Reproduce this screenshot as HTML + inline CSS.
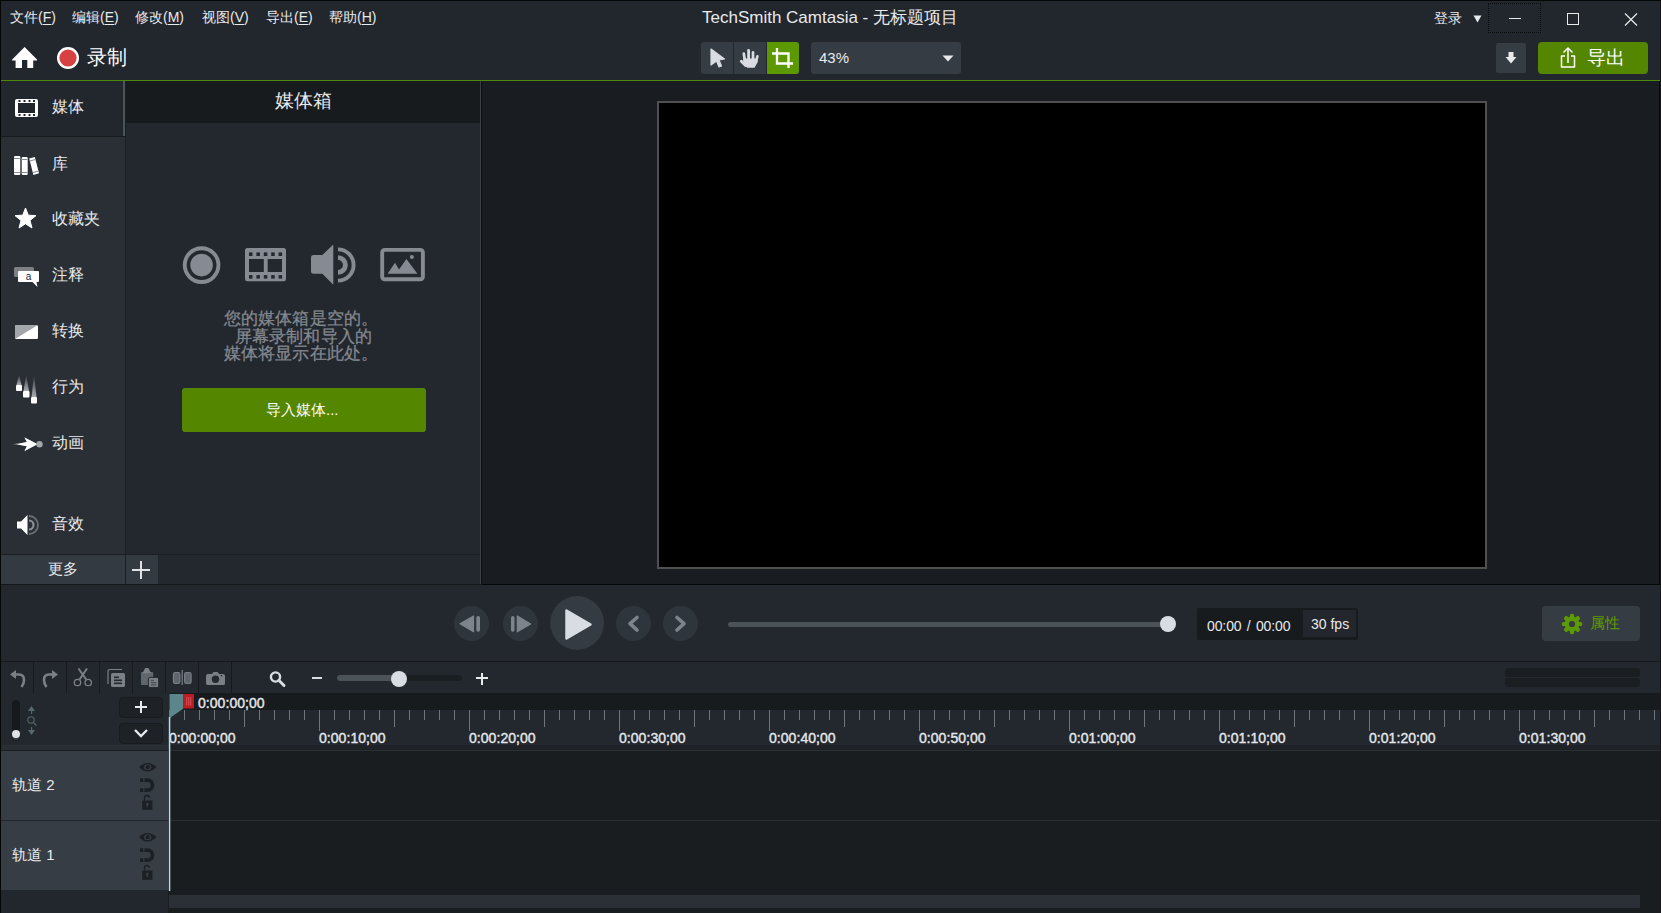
<!DOCTYPE html>
<html><head><meta charset="utf-8">
<style>
*{margin:0;padding:0;box-sizing:border-box}
html,body{width:1661px;height:913px;overflow:hidden;background:#22262d;font-family:"Liberation Sans",sans-serif;color:#e6e8ea}
.a{position:absolute}
.t{position:absolute;white-space:nowrap;line-height:1}
u{text-decoration-thickness:1px;text-underline-offset:2px}
</style></head><body>
<!-- title bar + toolbar -->
<div class="a" style="left:0;top:0;width:1661px;height:80px;background:#22262d"></div>
<div class="a" style="left:0;top:80px;width:1661px;height:1px;background:#4d8a0c"></div>


<!-- menu -->
<div class="t" style="left:10px;top:10px;font-size:14px;color:#e8eaec">文件(<u>F</u>)</div>
<div class="t" style="left:72px;top:10px;font-size:14px;color:#e8eaec">编辑(<u>E</u>)</div>
<div class="t" style="left:135px;top:10px;font-size:14px;color:#e8eaec">修改(<u>M</u>)</div>
<div class="t" style="left:202px;top:10px;font-size:14px;color:#e8eaec">视图(<u>V</u>)</div>
<div class="t" style="left:266px;top:10px;font-size:14px;color:#e8eaec">导出(<u>E</u>)</div>
<div class="t" style="left:329px;top:10px;font-size:14px;color:#e8eaec">帮助(<u>H</u>)</div>
<div class="t" style="left:702px;top:9px;font-size:17px;color:#e8eaec">TechSmith Camtasia - 无标题项目</div>
<div class="t" style="left:1434px;top:11px;font-size:14px;color:#e8eaec">登录</div>
<svg class="a" style="left:1472.5px;top:15px" width="10" height="9"><path d="M0.5 0.5H8.5L4.5 7.5Z" fill="#e8eaec"/></svg>
<div class="a" style="left:1488px;top:3px;width:53px;height:30px;border:1px dotted #0b0c0e"></div>
<div class="a" style="left:1509px;top:18px;width:12px;height:1px;background:#e8eaec"></div>
<div class="a" style="left:1567px;top:13px;width:12px;height:12px;border:1px solid #e8eaec"></div>
<svg class="a" style="left:1624px;top:13px" width="14" height="13"><path d="M1 0.5L13 12.5M13 0.5L1 12.5" stroke="#e8eaec" stroke-width="1.2"/></svg>
<!-- home + record -->
<svg class="a" style="left:11px;top:46px" width="28" height="24"><path d="M13.6 1L26 13.5Q26.5 14.5 25.5 14.5H22.2V22H16.3V14H11V22H4.6V14.5H1.6Q0.5 14.5 1.2 13.5Z" fill="#fff"/></svg>
<svg class="a" style="left:56px;top:46px" width="24" height="24"><circle cx="12" cy="12" r="9.8" fill="#d64141" stroke="#fff" stroke-width="2.4"/></svg>
<div class="t" style="left:87px;top:47px;font-size:20px;color:#fff">录制</div>
<!-- tools -->
<div class="a" style="left:701px;top:42px;width:98px;height:32px;background:#363c44;border-radius:3px"></div>
<div class="a" style="left:733px;top:42px;width:1px;height:32px;background:#22262d"></div>
<div class="a" style="left:766px;top:42px;width:1px;height:32px;background:#22262d"></div>
<div class="a" style="left:767px;top:42px;width:32px;height:32px;background:#5c9900;border-radius:0 3px 3px 0"></div>
<svg class="a" style="left:709px;top:48px" width="18" height="22"><path d="M2 1L15.5 11L10 12L12.5 18L10 19L7.5 13L2 17Z" fill="#d9dce2" stroke="#d9dce2" stroke-width="1.2" stroke-linejoin="round"/></svg>
<svg class="a" style="left:738px;top:47px" width="22" height="23"><g stroke="#d9dce2" stroke-linecap="round" fill="none"><path d="M5.8 6.6L6.8 13" stroke-width="2.7"/><path d="M10.6 3.3V12" stroke-width="2.8"/><path d="M15 5.4V12.5" stroke-width="2.7"/><path d="M19.4 9.3L18 14.5" stroke-width="2.6"/><path d="M3.3 14.3L7.5 18.5" stroke-width="2.8"/></g><path d="M5 11.5H20L19.5 15.5L16.5 20.8H9.2L5.5 17Z" fill="#d9dce2"/></svg>
<svg class="a" style="left:770px;top:46px" width="26" height="24"><path d="M7 2V17.5H23M2 7.5H18.5V22" stroke="#fff" stroke-width="2.3" fill="none"/></svg>
<div class="a" style="left:811px;top:42px;width:150px;height:32px;background:#363c44;border-radius:3px"></div>
<div class="t" style="left:819px;top:50px;font-size:15px;color:#e8eaec">43%</div>
<svg class="a" style="left:942px;top:55px" width="12" height="7"><path d="M0.5 0.5H11.5L6 6.5Z" fill="#e8eaec"/></svg>
<!-- right toolbar -->
<div class="a" style="left:1496px;top:43px;width:30px;height:30px;background:#363c44;border-radius:2px"></div>
<svg class="a" style="left:1504px;top:51px" width="14" height="14"><path d="M4.5 1H9.5V6H12.5L7 12.5L1.5 6H4.5Z" fill="#e8eaec"/></svg>
<div class="a" style="left:1538px;top:42px;width:110px;height:32px;background:#548600;border-radius:4px"></div>
<svg class="a" style="left:1558px;top:46px" width="20" height="23"><path d="M10 17V2M5.5 6.5L10 2L14.5 6.5M7 10H3.5V21H16.5V10H13" stroke="#fff" stroke-width="1.5" fill="none" stroke-linejoin="round"/></svg>
<div class="t" style="left:1587px;top:48px;font-size:19px;color:#fff">导出</div>

<!-- left tabs -->
<div class="a" style="left:0;top:81px;width:125px;height:473px;background:#2a2f36"></div>
<div class="a" style="left:0;top:81px;width:123px;height:55px;background:#22262d"></div>
<div class="a" style="left:123px;top:81px;width:2px;height:55px;background:#4a555a"></div>
<div class="a" style="left:0;top:136px;width:125px;height:1px;background:#181b1e"></div>
<div class="a" style="left:125px;top:81px;width:1px;height:504px;background:#1b1e22"></div>
<!-- more bar -->
<div class="a" style="left:0;top:554px;width:481px;height:1px;background:#1b1e22"></div>
<div class="a" style="left:0;top:555px;width:125px;height:29px;background:#343a42"></div>
<div class="a" style="left:126px;top:555px;width:32px;height:29px;background:#343a42"></div>


<!-- tab contents -->
<div class="a" style="left:0;top:81px;width:1px;height:504px;background:#121417"></div>
<svg class="a" style="left:14px;top:98px" width="26" height="21"><rect x="1" y="1" width="23" height="18" rx="2" fill="#fff"/><rect x="4" y="5" width="17" height="10" fill="#22262d"/><g fill="#22262d"><rect x="4.5" y="2" width="2" height="2"/><rect x="9.5" y="2" width="2" height="2"/><rect x="14.5" y="2" width="2" height="2"/><rect x="19" y="2" width="2" height="2"/><rect x="4.5" y="16" width="2" height="2"/><rect x="9.5" y="16" width="2" height="2"/><rect x="14.5" y="16" width="2" height="2"/><rect x="19" y="16" width="2" height="2"/></g></svg>
<div class="t" style="left:52px;top:99px;font-size:16px;color:#e8eaec">媒体</div>
<svg class="a" style="left:13px;top:155px" width="28" height="22"><g fill="#fff"><rect x="1" y="1" width="6.3" height="19" rx="1.2"/><rect x="8.7" y="2" width="6" height="18" rx="1.2"/><path d="M16.2 3.6L21.8 2L26 18.3L20.4 20Z"/></g><g fill="#8a8e93"><rect x="1" y="3" width="6.3" height="1"/><rect x="1" y="17" width="6.3" height="1"/><rect x="8.7" y="4" width="6" height="1"/><rect x="8.7" y="17" width="6" height="1"/><path d="M16.7 5.6L22.3 4L22.55 5L16.95 6.6Z"/><path d="M19.9 17L25.5 15.4L25.75 16.4L20.15 18Z"/></g></svg>
<div class="t" style="left:52px;top:156px;font-size:16px;color:#e8eaec">库</div>
<svg class="a" style="left:14px;top:207px" width="24" height="23"><path d="M11.5 1L14.3 8.2L22 8.6L16 13.5L18 21L11.5 16.8L5 21L7 13.5L1 8.6L8.7 8.2Z" fill="#fff" stroke="#fff" stroke-width="1" stroke-linejoin="round"/></svg>
<div class="t" style="left:52px;top:211px;font-size:16px;color:#e8eaec">收藏夹</div>
<svg class="a" style="left:13px;top:266px" width="28" height="23"><rect x="1" y="1" width="20" height="10" rx="1.5" fill="#7d8186"/><path d="M6 5H25Q26 5 26 6V15Q26 16 25 16H23.5L24.5 21L19.5 16H6Q5 16 5 15V6Q5 5 6 5Z" fill="#fff"/><text x="15.5" y="14" font-size="10" font-family="Liberation Sans" text-anchor="middle" fill="#22262d">a</text></svg>
<div class="t" style="left:52px;top:267px;font-size:16px;color:#e8eaec">注释</div>
<svg class="a" style="left:14px;top:324px" width="25" height="16"><rect x="1" y="1" width="23" height="14" rx="1.5" fill="#fff"/><path d="M1 15V2.5Q1 1 2.5 1H24Z" fill="#a3a6aa"/></svg>
<div class="t" style="left:52px;top:323px;font-size:16px;color:#e8eaec">转换</div>
<svg class="a" style="left:14px;top:375px" width="26" height="30"><defs><linearGradient id="tr" x1="0" y1="0" x2="0" y2="1"><stop offset="0" stop-color="#fff" stop-opacity="0.05"/><stop offset="1" stop-color="#fff" stop-opacity="0.6"/></linearGradient></defs><path d="M2.5 10L5 0L7.5 10Z" fill="url(#tr)"/><path d="M9.5 16L12.2 0L15 16Z" fill="url(#tr)"/><path d="M17.5 22L20 0L22.5 22Z" fill="url(#tr)"/><g fill="#fff"><rect x="2" y="10" width="6" height="6" rx="1"/><rect x="9" y="16" width="6.5" height="6.5" rx="1"/><rect x="17" y="22" width="6" height="6.5" rx="1"/></g></svg>
<div class="t" style="left:52px;top:379px;font-size:16px;color:#e8eaec">行为</div>
<svg class="a" style="left:11px;top:436px" width="33" height="17"><defs><linearGradient id="an" x1="0" y1="0" x2="1" y2="0"><stop offset="0" stop-color="#fff" stop-opacity="0.2"/><stop offset="0.6" stop-color="#fff"/></linearGradient></defs><path d="M1 8.2Q12 7 16 6L13.5 1.5L26 8L13.5 15L16 10Q12 9.5 1 8.2Z" fill="url(#an)"/><path d="M6 8.2L16 6L13.5 1.5L26.5 8.2L13.5 15L16 10.3Z" fill="#fff"/><circle cx="28.5" cy="8.2" r="3.2" fill="#a3a6aa"/></svg>
<div class="t" style="left:52px;top:435px;font-size:16px;color:#e8eaec">动画</div>
<svg class="a" style="left:16px;top:514px" width="24" height="22"><path d="M1 7.5H5L11.5 1V21L5 14.5H1Z" fill="#fff"/><path d="M13 6.5A4.5 4.5 0 0 1 13 15.5" stroke="#8b8f94" stroke-width="2.2" fill="none"/><path d="M13 2A9 9 0 0 1 13 20" stroke="#6b6f74" stroke-width="1.8" fill="none"/></svg>
<div class="t" style="left:52px;top:516px;font-size:16px;color:#e8eaec">音效</div>
<div class="t" style="left:48px;top:561px;font-size:15px;color:#e8eaec">更多</div>
<div class="a" style="left:132px;top:569px;width:18px;height:2px;background:#e0e2e6"></div>
<div class="a" style="left:140px;top:561px;width:2px;height:18px;background:#e0e2e6"></div>

<!-- media bin -->
<div class="a" style="left:126px;top:81px;width:354px;height:473px;background:#23272e"></div>
<div class="a" style="left:126px;top:81px;width:354px;height:42px;background:#181b1e"></div>
<div class="a" style="left:158px;top:555px;width:322px;height:29px;background:#23272e"></div>
<div class="a" style="left:480px;top:81px;width:1px;height:504px;background:#3a3f45"></div>
<div class="a" style="left:481px;top:81px;width:1px;height:504px;background:#0d0f11"></div>


<!-- media bin content -->
<div class="t" style="left:275px;top:91px;font-size:19px;color:#e8eaec">媒体箱</div>
<svg class="a" style="left:180px;top:243px" width="44" height="44"><circle cx="21.6" cy="22.1" r="16.85" fill="none" stroke="#868a92" stroke-width="3.9"/><circle cx="21.6" cy="22.1" r="11.3" fill="#868a92"/></svg>
<svg class="a" style="left:244px;top:247px" width="44" height="36"><rect x="1" y="0.9" width="41" height="33.3" rx="2.5" fill="#868a92"/><g fill="#23272e"><rect x="5" y="12" width="14.8" height="13"/><rect x="23.7" y="12" width="14.3" height="13"/><rect x="5" y="5.4" width="3.5" height="3.6"/><rect x="12.4" y="5.4" width="3.5" height="3.6"/><rect x="19.8" y="5.4" width="3.5" height="3.6"/><rect x="27.2" y="5.4" width="3.5" height="3.6"/><rect x="34.6" y="5.4" width="3.5" height="3.6"/><rect x="5" y="28.1" width="3.5" height="3.5"/><rect x="12.4" y="28.1" width="3.5" height="3.5"/><rect x="19.8" y="28.1" width="3.5" height="3.5"/><rect x="27.2" y="28.1" width="3.5" height="3.5"/><rect x="34.6" y="28.1" width="3.5" height="3.5"/></g></svg>
<svg class="a" style="left:308px;top:242px" width="50" height="46"><path d="M5.5 13H14.3L25.3 2.4V42.7L14.3 31.7H5.5Q3 31.7 3 29.2V15.5Q3 13 5.5 13Z" fill="#868a92"/><path d="M30 15.6A7.4 7.4 0 0 1 30 30.4" fill="none" stroke="#868a92" stroke-width="4.8"/><path d="M30 7.4A15.6 15.6 0 0 1 30 38.6" fill="none" stroke="#868a92" stroke-width="3.9"/></svg>
<svg class="a" style="left:379px;top:247px" width="48" height="36"><rect x="3.2" y="2.9" width="40.7" height="29.4" rx="2.5" fill="none" stroke="#868a92" stroke-width="3.9"/><path d="M8.6 26.7L16 15.8L20 22.4L27.4 11.9L38.4 26.7Z" fill="#868a92"/><circle cx="32.9" cy="10.1" r="2" fill="#868a92"/></svg>
<div class="a" style="left:160px;top:310px;width:282px;text-align:center;font-size:16.5px;line-height:17.6px;color:#858990;letter-spacing:0.2px;-webkit-text-stroke:0.25px #858990">您的媒体箱是空的。<br>&nbsp;屏幕录制和导入的<br>媒体将显示在此处。</div>
<div class="a" style="left:182px;top:388px;width:244px;height:44px;background:#548600;border-radius:3px"></div>
<div class="t" style="left:266px;top:402px;font-size:15px;color:#fff">导入媒体...</div>

<!-- preview -->
<div class="a" style="left:482px;top:81px;width:1178px;height:503px;background:#191c20"></div>
<div class="a" style="left:657px;top:101px;width:830px;height:468px;background:#000;border:2px solid #4f5050"></div>
<div class="a" style="left:0;top:584px;width:482px;height:1px;background:#15171a"></div><div class="a" style="left:482px;top:583.5px;width:1178px;height:2px;background:#050606"></div><div class="a" style="left:1659px;top:81px;width:1px;height:504px;background:#050606"></div><div class="a" style="left:0;top:912px;width:1661px;height:1px;background:#050606"></div>
<div class="a" style="left:1660px;top:0;width:1px;height:913px;background:#15171a"></div>

<!-- player bar -->
<div class="a" style="left:0;top:585px;width:1660px;height:76px;background:#23272e"></div>
<div class="a" style="left:0;top:661px;width:1660px;height:1px;background:#17191c"></div>

<!-- timeline toolbar -->
<div class="a" style="left:0;top:662px;width:1660px;height:31px;background:#23272e"></div>


<!-- player controls -->
<svg class="a" style="left:450px;top:594px" width="250" height="60">
<g fill="#2f353c"><circle cx="21.6" cy="29.5" r="17.5"/><circle cx="70.4" cy="29.5" r="17.5"/><circle cx="183.5" cy="29.5" r="17.5"/><circle cx="230.4" cy="29.5" r="17.5"/></g>
<circle cx="127.1" cy="29" r="26.9" fill="#353b43"/>
<g fill="#7e848b"><path d="M10 29.8L23.5 22V37.8Z" stroke="#7e848b" stroke-width="1.2" stroke-linejoin="round"/><rect x="26.3" y="22" width="3.7" height="15.8" rx="1.8"/>
<rect x="61" y="22" width="3.5" height="15.8" rx="1.7"/><path d="M67.3 22V37.8L80.6 29.9Z" stroke="#7e848b" stroke-width="1.2" stroke-linejoin="round"/></g>
<path d="M116.5 16.5V44.5L140.5 30.5Z" fill="#d8dce3" stroke="#d8dce3" stroke-width="2.5" stroke-linejoin="round"/>
<path d="M187 23.5L180 29.7L187 36" fill="none" stroke="#7e848b" stroke-width="3.6" stroke-linecap="round" stroke-linejoin="round"/>
<path d="M227 23.5L234 29.7L227 36" fill="none" stroke="#7e848b" stroke-width="3.6" stroke-linecap="round" stroke-linejoin="round"/>
</svg>
<div class="a" style="left:728px;top:622px;width:442px;height:5px;background:#4b5359;border-radius:3px"></div>
<div class="a" style="left:1159.5px;top:616px;width:16px;height:16px;background:#d8dce3;border-radius:50%"></div>
<div class="a" style="left:1197px;top:608px;width:161px;height:32px;background:#181b1e;border-radius:2px"></div>
<div class="a" style="left:1303px;top:610px;width:53px;height:27px;background:#23272d"></div>
<div class="t" style="left:1207px;top:619px;font-size:14px;color:#e8eaec;word-spacing:1.5px;letter-spacing:-0.1px">00:00 / 00:00</div>
<div class="t" style="left:1311px;top:617px;font-size:14px;color:#e8eaec">30 fps</div>
<div class="a" style="left:1542px;top:606px;width:98px;height:35px;background:#363c44;border-radius:4px"></div>
<svg class="a" style="left:1560px;top:612px" width="24" height="24"><g transform="translate(12 12)" fill="#5c9a00"><circle r="7.4"/><rect id="tooth" x="-2.1" y="-10.2" width="4.2" height="5" rx="1.6"/><use href="#tooth" transform="rotate(45)"/><use href="#tooth" transform="rotate(90)"/><use href="#tooth" transform="rotate(135)"/><use href="#tooth" transform="rotate(180)"/><use href="#tooth" transform="rotate(225)"/><use href="#tooth" transform="rotate(270)"/><use href="#tooth" transform="rotate(315)"/><circle r="3.1" fill="#363c44"/></g></svg>
<div class="t" style="left:1590px;top:615px;font-size:15px;color:#5c9a00">属性</div>

<!-- timeline toolbar content -->
<div class="a" style="left:0;top:662px;width:1px;height:251px;background:#0d0f11"></div>
<svg class="a" style="left:0;top:662px" width="240" height="31"><g fill="#17191c"><rect x="33" y="0" width="1" height="31"/><rect x="66" y="0" width="1" height="31"/><rect x="99" y="0" width="1" height="31"/><rect x="132" y="0" width="1" height="31"/><rect x="165" y="0" width="1" height="31"/><rect x="198" y="0" width="1" height="31"/><rect x="231" y="0" width="1" height="31"/></g>
<g fill="none" stroke="#7b8087" stroke-width="2.6"><path d="M15 12.5H19Q24 12.5 24 18Q24 22 21.5 25"/><path d="M53 12.5H49Q44 12.5 44 18Q44 22 46.5 25"/></g>
<g fill="#7b8087"><path d="M10 12.5L16 8V17Z"/><path d="M58 12.5L52 8V17Z"/></g>
<g fill="none" stroke="#7b8087" stroke-width="1.3"><circle cx="77.5" cy="20.5" r="3.2"/><circle cx="88.2" cy="20.5" r="3.2"/><path d="M79.5 17.5L87 6.5M86.2 17.5L78.5 6.5" stroke-width="2"/></g>
<path d="M108 22V9Q108 7.5 109.5 7.5H122" fill="none" stroke="#7b8087" stroke-width="1.2"/><rect x="111" y="11" width="14" height="14" rx="1.5" fill="#7b8087"/><g fill="#23272e"><rect x="114" y="14.5" width="5" height="1.6"/><rect x="114" y="17.5" width="8" height="1.6"/><rect x="114" y="20.5" width="8" height="1.6"/></g>
<rect x="141" y="10" width="12.2" height="13" rx="1" fill="#60666d"/><path d="M142.5 11.2L145.2 6H148.4L151.2 11.2Z" fill="#7b8087"/><rect x="148.4" y="15.4" width="10.3" height="10.2" rx="1.6" fill="#7b8087" stroke="#23272e" stroke-width="1"/><g fill="#4a4f55"><rect x="150.8" y="17.8" width="3" height="1.3"/><rect x="150.8" y="20" width="5.6" height="1.3"/><rect x="150.8" y="22.3" width="5.6" height="1.3"/></g>
<g fill="#5f656c" stroke="#7b8087" stroke-width="1.1"><rect x="173.4" y="10.5" width="6.5" height="11" rx="1.8"/><rect x="184.6" y="10.5" width="6.5" height="11" rx="1.8"/></g><rect x="181.6" y="8" width="1.2" height="15" fill="#7b8087"/>
<path d="M208 12Q206 12 206 14V21.5Q206 23 208 23H223Q225 23 225 21.5V14Q225 12 223 12H219L217.5 10H213.5L212 12Z" fill="#7b8087"/><circle cx="215.5" cy="17.2" r="3.7" fill="#23272e"/><circle cx="221.5" cy="13.6" r="0.8" fill="#23272e"/>
</svg>
<svg class="a" style="left:268px;top:670px" width="20" height="18"><circle cx="7.5" cy="7" r="4.6" fill="none" stroke="#d8dce3" stroke-width="2.4"/><path d="M10.8 10.3L16 15.5" stroke="#d8dce3" stroke-width="3" stroke-linecap="round"/></svg>
<div class="a" style="left:312px;top:677px;width:10px;height:2px;background:#d8dce3"></div>
<div class="a" style="left:337px;top:675px;width:125px;height:6px;background:#1b1e21;border-radius:3px"></div>
<div class="a" style="left:337px;top:675px;width:62px;height:6px;background:#4b5359;border-radius:3px 0 0 3px"></div>
<div class="a" style="left:391px;top:670.5px;width:16px;height:16px;background:#d8dce3;border-radius:50%"></div>
<div class="a" style="left:476px;top:677px;width:12px;height:2.4px;background:#e8eaec"></div>
<div class="a" style="left:480.8px;top:672.5px;width:2.4px;height:12px;background:#e8eaec"></div>
<div class="a" style="left:1505px;top:668px;width:135px;height:9px;background:#1b1e21;border-radius:3px"></div>
<div class="a" style="left:1505px;top:678px;width:135px;height:9px;background:#1b1e21;border-radius:3px"></div>

<!-- timeline ruler -->
<div class="a" style="left:0;top:693px;width:169px;height:55px;background:#23272e"></div>
<div class="a" style="left:169px;top:693px;width:1491px;height:17px;background:#181b1e"></div>
<div class="a" style="left:169px;top:710px;width:1491px;height:38px;background:#23272e"></div>

<!-- tracks -->
<div class="a" style="left:0;top:748px;width:1660px;height:165px;background:#1a1d20"></div>
<div class="a" style="left:0;top:751px;width:168px;height:69px;background:#363d45"></div>
<div class="a" style="left:0;top:821px;width:168px;height:69px;background:#363d45"></div>
<div class="a" style="left:0;top:890px;width:168px;height:23px;background:#22262d"></div>
<div class="a" style="left:169px;top:895px;width:1471px;height:13px;background:#2b3036"></div>

<!-- ruler content -->
<div class="a" style="left:0;top:745px;width:168px;height:5px;background:#282e34"></div>
<div class="a" style="left:169px;top:745px;width:1491px;height:5px;background:#1e2125"></div>
<div class="a" style="left:169px;top:750px;width:1491px;height:1px;background:#2a2e33"></div>
<div class="a" style="left:169px;top:820px;width:1491px;height:1px;background:#2a2e33"></div>
<div class="a" style="left:0;top:820px;width:168px;height:1px;background:#23272c"></div>
<svg class="a" style="left:0;top:710px" width="1660" height="22"><g fill="#6e757b"><rect x="169.0" y="0" width="1" height="21"/><rect x="184.0" y="0" width="1" height="10"/><rect x="199.0" y="0" width="1" height="10"/><rect x="214.0" y="0" width="1" height="10"/><rect x="229.0" y="0" width="1" height="10"/><rect x="244.0" y="0" width="1" height="17"/><rect x="259.0" y="0" width="1" height="10"/><rect x="274.0" y="0" width="1" height="10"/><rect x="289.0" y="0" width="1" height="10"/><rect x="304.0" y="0" width="1" height="10"/><rect x="319.0" y="0" width="1" height="21"/><rect x="334.0" y="0" width="1" height="10"/><rect x="349.0" y="0" width="1" height="10"/><rect x="364.0" y="0" width="1" height="10"/><rect x="379.0" y="0" width="1" height="10"/><rect x="394.0" y="0" width="1" height="17"/><rect x="409.0" y="0" width="1" height="10"/><rect x="424.0" y="0" width="1" height="10"/><rect x="439.0" y="0" width="1" height="10"/><rect x="454.0" y="0" width="1" height="10"/><rect x="469.0" y="0" width="1" height="21"/><rect x="484.0" y="0" width="1" height="10"/><rect x="499.0" y="0" width="1" height="10"/><rect x="514.0" y="0" width="1" height="10"/><rect x="529.0" y="0" width="1" height="10"/><rect x="544.0" y="0" width="1" height="17"/><rect x="559.0" y="0" width="1" height="10"/><rect x="574.0" y="0" width="1" height="10"/><rect x="589.0" y="0" width="1" height="10"/><rect x="604.0" y="0" width="1" height="10"/><rect x="619.0" y="0" width="1" height="21"/><rect x="634.0" y="0" width="1" height="10"/><rect x="649.0" y="0" width="1" height="10"/><rect x="664.0" y="0" width="1" height="10"/><rect x="679.0" y="0" width="1" height="10"/><rect x="694.0" y="0" width="1" height="17"/><rect x="709.0" y="0" width="1" height="10"/><rect x="724.0" y="0" width="1" height="10"/><rect x="739.0" y="0" width="1" height="10"/><rect x="754.0" y="0" width="1" height="10"/><rect x="769.0" y="0" width="1" height="21"/><rect x="784.0" y="0" width="1" height="10"/><rect x="799.0" y="0" width="1" height="10"/><rect x="814.0" y="0" width="1" height="10"/><rect x="829.0" y="0" width="1" height="10"/><rect x="844.0" y="0" width="1" height="17"/><rect x="859.0" y="0" width="1" height="10"/><rect x="874.0" y="0" width="1" height="10"/><rect x="889.0" y="0" width="1" height="10"/><rect x="904.0" y="0" width="1" height="10"/><rect x="919.0" y="0" width="1" height="21"/><rect x="934.0" y="0" width="1" height="10"/><rect x="949.0" y="0" width="1" height="10"/><rect x="964.0" y="0" width="1" height="10"/><rect x="979.0" y="0" width="1" height="10"/><rect x="994.0" y="0" width="1" height="17"/><rect x="1009.0" y="0" width="1" height="10"/><rect x="1024.0" y="0" width="1" height="10"/><rect x="1039.0" y="0" width="1" height="10"/><rect x="1054.0" y="0" width="1" height="10"/><rect x="1069.0" y="0" width="1" height="21"/><rect x="1084.0" y="0" width="1" height="10"/><rect x="1099.0" y="0" width="1" height="10"/><rect x="1114.0" y="0" width="1" height="10"/><rect x="1129.0" y="0" width="1" height="10"/><rect x="1144.0" y="0" width="1" height="17"/><rect x="1159.0" y="0" width="1" height="10"/><rect x="1174.0" y="0" width="1" height="10"/><rect x="1189.0" y="0" width="1" height="10"/><rect x="1204.0" y="0" width="1" height="10"/><rect x="1219.0" y="0" width="1" height="21"/><rect x="1234.0" y="0" width="1" height="10"/><rect x="1249.0" y="0" width="1" height="10"/><rect x="1264.0" y="0" width="1" height="10"/><rect x="1279.0" y="0" width="1" height="10"/><rect x="1294.0" y="0" width="1" height="17"/><rect x="1309.0" y="0" width="1" height="10"/><rect x="1324.0" y="0" width="1" height="10"/><rect x="1339.0" y="0" width="1" height="10"/><rect x="1354.0" y="0" width="1" height="10"/><rect x="1369.0" y="0" width="1" height="21"/><rect x="1384.0" y="0" width="1" height="10"/><rect x="1399.0" y="0" width="1" height="10"/><rect x="1414.0" y="0" width="1" height="10"/><rect x="1429.0" y="0" width="1" height="10"/><rect x="1444.0" y="0" width="1" height="17"/><rect x="1459.0" y="0" width="1" height="10"/><rect x="1474.0" y="0" width="1" height="10"/><rect x="1489.0" y="0" width="1" height="10"/><rect x="1504.0" y="0" width="1" height="10"/><rect x="1519.0" y="0" width="1" height="21"/><rect x="1534.0" y="0" width="1" height="10"/><rect x="1549.0" y="0" width="1" height="10"/><rect x="1564.0" y="0" width="1" height="10"/><rect x="1579.0" y="0" width="1" height="10"/><rect x="1594.0" y="0" width="1" height="17"/><rect x="1609.0" y="0" width="1" height="10"/><rect x="1624.0" y="0" width="1" height="10"/><rect x="1639.0" y="0" width="1" height="10"/><rect x="1654.0" y="0" width="1" height="10"/></g></svg>
<div class="t" style="left:169px;top:731px;font-size:14px;color:#e4e7ea;-webkit-text-stroke:0.4px #e4e7ea;letter-spacing:0.05px">0:00:00;00</div><div class="t" style="left:319px;top:731px;font-size:14px;color:#e4e7ea;-webkit-text-stroke:0.4px #e4e7ea;letter-spacing:0.05px">0:00:10;00</div><div class="t" style="left:469px;top:731px;font-size:14px;color:#e4e7ea;-webkit-text-stroke:0.4px #e4e7ea;letter-spacing:0.05px">0:00:20;00</div><div class="t" style="left:619px;top:731px;font-size:14px;color:#e4e7ea;-webkit-text-stroke:0.4px #e4e7ea;letter-spacing:0.05px">0:00:30;00</div><div class="t" style="left:769px;top:731px;font-size:14px;color:#e4e7ea;-webkit-text-stroke:0.4px #e4e7ea;letter-spacing:0.05px">0:00:40;00</div><div class="t" style="left:919px;top:731px;font-size:14px;color:#e4e7ea;-webkit-text-stroke:0.4px #e4e7ea;letter-spacing:0.05px">0:00:50;00</div><div class="t" style="left:1069px;top:731px;font-size:14px;color:#e4e7ea;-webkit-text-stroke:0.4px #e4e7ea;letter-spacing:0.05px">0:01:00;00</div><div class="t" style="left:1219px;top:731px;font-size:14px;color:#e4e7ea;-webkit-text-stroke:0.4px #e4e7ea;letter-spacing:0.05px">0:01:10;00</div><div class="t" style="left:1369px;top:731px;font-size:14px;color:#e4e7ea;-webkit-text-stroke:0.4px #e4e7ea;letter-spacing:0.05px">0:01:20;00</div><div class="t" style="left:1519px;top:731px;font-size:14px;color:#e4e7ea;-webkit-text-stroke:0.4px #e4e7ea;letter-spacing:0.05px">0:01:30;00</div>
<!-- vertical zoom slider -->
<div class="a" style="left:12px;top:700px;width:8px;height:41px;background:#161a1c;border-radius:4px"></div>
<div class="a" style="left:12px;top:731px;width:8px;height:9px;background:#3a4044;border-radius:50%"></div>
<div class="a" style="left:12px;top:730px;width:8px;height:8px;background:#dfe2e6;border-radius:50%"></div>
<svg class="a" style="left:26px;top:704px" width="14" height="34"><g fill="#56686c"><path d="M5.5 2L2 7H9Z"/><rect x="5" y="6" width="1.2" height="4"/><path d="M5.5 31L2 26H9Z"/><rect x="5" y="23" width="1.2" height="4"/></g><circle cx="5" cy="16" r="3.2" fill="none" stroke="#56686c" stroke-width="1.1"/><path d="M7.3 18.3L10.5 21.5" stroke="#56686c" stroke-width="1.2"/></svg>
<div class="a" style="left:119px;top:697px;width:44px;height:21px;background:#1e2125;border:1px solid #191b1e;border-radius:4px"></div>
<div class="a" style="left:119px;top:723px;width:44px;height:21px;background:#1e2125;border:1px solid #191b1e;border-radius:4px"></div>
<div class="a" style="left:135px;top:706px;width:12px;height:2.2px;background:#e8eaec"></div>
<div class="a" style="left:139.9px;top:701px;width:2.2px;height:12px;background:#e8eaec"></div>
<svg class="a" style="left:133px;top:728px" width="16" height="10"><path d="M2 2L8 8L14 2" fill="none" stroke="#e8eaec" stroke-width="2.3"/></svg>
<!-- header bar label -->
<div class="t" style="left:198px;top:696px;font-size:14px;color:#e4e7ea;-webkit-text-stroke:0.4px #e4e7ea;letter-spacing:0.05px">0:00:00;00</div>
<!-- playhead -->
<svg class="a" style="left:168px;top:693px" width="30" height="200"><path d="M1.5 1H15.5V15.6L1.5 25.2Z" fill="#5a868c"/><rect x="15.5" y="1" width="10.5" height="14.6" rx="1" fill="#b81d23"/><g fill="#d9545c"><rect x="18.3" y="4" width="0.9" height="8.5"/><rect x="20.3" y="4" width="0.9" height="8.5"/><rect x="22.3" y="4" width="0.9" height="8.5"/></g><rect x="0.8" y="24" width="1.5" height="174" fill="#b8dcee"/></svg>
<!-- track labels -->
<div class="t" style="left:12px;top:777px;font-size:15px;color:#e8eaec">轨道 2</div>
<div class="t" style="left:12px;top:847px;font-size:15px;color:#e8eaec">轨道 1</div>
<svg class="a" style="left:137px;top:762px" width="22" height="50"><path d="M2 5.2Q10.5 -3.2 19.5 5.2Q10.5 13.6 2 5.2Z" fill="#1c2024"/><ellipse cx="10.7" cy="5.2" rx="3.6" ry="2.9" fill="#363d45"/><circle cx="10.7" cy="5.2" r="2.1" fill="#1c2024"/><path d="M3 16.3H10.5A6.85 6.85 0 0 1 10.5 30H3V26.3H10.5A3.15 3.15 0 0 0 10.5 20H3Z" fill="#1c2024"/><rect x="6.3" y="16" width="1.1" height="4.3" fill="#363d45"/><rect x="6.3" y="26" width="1.1" height="4.3" fill="#363d45"/><path d="M7.5 38.5V36Q7.5 33.5 10 33.5Q12.5 33.5 12.5 36" fill="none" stroke="#1c2024" stroke-width="1.3"/><rect x="5.2" y="38.5" width="10.2" height="9.3" fill="#1c2024"/><circle cx="10.3" cy="42" r="1.3" fill="#363d45"/><rect x="9.6" y="42" width="1.4" height="3" fill="#363d45"/></svg><svg class="a" style="left:137px;top:832px" width="22" height="50"><path d="M2 5.2Q10.5 -3.2 19.5 5.2Q10.5 13.6 2 5.2Z" fill="#1c2024"/><ellipse cx="10.7" cy="5.2" rx="3.6" ry="2.9" fill="#363d45"/><circle cx="10.7" cy="5.2" r="2.1" fill="#1c2024"/><path d="M3 16.3H10.5A6.85 6.85 0 0 1 10.5 30H3V26.3H10.5A3.15 3.15 0 0 0 10.5 20H3Z" fill="#1c2024"/><rect x="6.3" y="16" width="1.1" height="4.3" fill="#363d45"/><rect x="6.3" y="26" width="1.1" height="4.3" fill="#363d45"/><path d="M7.5 38.5V36Q7.5 33.5 10 33.5Q12.5 33.5 12.5 36" fill="none" stroke="#1c2024" stroke-width="1.3"/><rect x="5.2" y="38.5" width="10.2" height="9.3" fill="#1c2024"/><circle cx="10.3" cy="42" r="1.3" fill="#363d45"/><rect x="9.6" y="42" width="1.4" height="3" fill="#363d45"/></svg>
<div class="a" style="left:0;top:0;width:1661px;height:1px;background:#050606"></div><div class="a" style="left:0;top:0;width:1px;height:913px;background:#050606"></div>
</body></html>
